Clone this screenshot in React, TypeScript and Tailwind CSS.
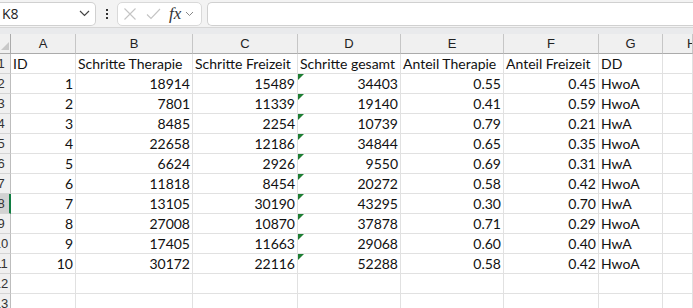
const rows: [number, number, number, number, string, string, string][] = [
  [1, 18914, 15489, 34403, "0.55", "0.45", "HwoA"],
  [2, 7801, 11339, 19140, "0.41", "0.59", "HwoA"],
  [3, 8485, 2254, 10739, "0.79", "0.21", "HwA"],
  [4, 22658, 12186, 34844, "0.65", "0.35", "HwoA"],
  [5, 6624, 2926, 9550, "0.69", "0.31", "HwA"],
  [6, 11818, 8454, 20272, "0.58", "0.42", "HwoA"],
  [7, 13105, 30190, 43295, "0.30", "0.70", "HwA"],
  [8, 27008, 10870, 37878, "0.71", "0.29", "HwoA"],
  [9, 17405, 11663, 29068, "0.60", "0.40", "HwA"],
  [10, 30172, 22116, 52288, "0.58", "0.42", "HwoA"],
];

const cols = "grid-cols-[11px_65px_117px_105px_103px_103px_95px_64px_1fr]";
const cell = "h-5 border-r border-b border-[#e1e1e1] overflow-hidden whitespace-nowrap px-[2px] leading-[19px] text-[14px] text-[#111]";
const cellFont = { fontFamily: "Lato, 'Open Sans', sans-serif" };

function RowHead({ n, active }: { n: number; active?: boolean }) {
  return (
    <div
      className={
        "h-5 overflow-hidden border-b border-[#d4d4d4] " +
        (active ? "bg-[#d2d2d2] border-r-2 border-r-[#107c41]" : "bg-[#f0f0f0] border-r border-r-[#bdbdbd]")
      }
    >
      <div
        className="ml-[-14px] w-[30px] text-center text-[13px] leading-[19px] text-[#333]"
        style={{ fontFamily: "'Liberation Sans', Arial, sans-serif" }}
      >
        {n}
      </div>
    </div>
  );
}

function Tri() {
  return <span className="absolute left-0 top-0 h-0 w-0 border-t-[6px] border-r-[6px] border-t-[#1e7e34] border-r-transparent" />;
}

export default function App() {
  return (
    <div className="h-[308px] w-[693px] overflow-hidden bg-white" style={{ fontFamily: "'Liberation Sans', Arial, sans-serif" }}>
      <div className="h-[28px] bg-[#f3f3f3] flex items-center border-b border-[#d6d6d6]">
        <div className="flex h-[24px] w-[96px] items-center justify-between rounded-r-[5px] border border-l-0 border-[#d0d0d0] bg-white pl-[2px] pr-[5px]">
          <span className="text-[14px] text-[#222]" style={{ fontFamily: "'Open Sans', sans-serif" }}>K8</span>
          <svg width="11" height="7" viewBox="0 0 11 7"><path d="M1 1l4.5 4.5L10 1" fill="none" stroke="#444" strokeWidth="1.2" /></svg>
        </div>
        <div className="flex w-[21px] flex-col items-center justify-center gap-[2px]">
          <span className="h-[2px] w-[2px] bg-[#333]" />
          <span className="h-[2px] w-[2px] bg-[#333]" />
          <span className="h-[2px] w-[2px] bg-[#333]" />
        </div>
        <div className="flex h-[24px] w-[85px] items-center rounded-[5px] border border-[#d9d9d9] bg-white pl-[5px]">
          <svg width="14" height="14" viewBox="0 0 14 14"><path d="M1.5 1.5l11 11M12.5 1.5l-11 11" stroke="#c4c4c4" strokeWidth="1.1" /></svg>
          <svg className="ml-[9px]" width="15" height="12" viewBox="0 0 15 12"><path d="M1 6.5l4 4L14 1" fill="none" stroke="#c4c4c4" strokeWidth="1.1" /></svg>
          <span className="ml-[8px] text-[17px] italic text-[#333]" style={{ fontFamily: "'Liberation Serif', serif" }}>fx</span>
          <svg className="ml-[4px]" width="9" height="6" viewBox="0 0 9 6"><path d="M1 1l3.5 3.5L8 1" fill="none" stroke="#888" strokeWidth="1" /></svg>
        </div>
        <div className="ml-[5px] h-[24px] flex-1 rounded-l-[5px] border border-r-0 border-[#d0d0d0] bg-white" />
      </div>
      <div className="h-[6px] bg-[#e9eaec]" />
      <div className={"grid " + cols} style={cellFont}>
        <div className="relative h-5 border-r border-b border-[#ababab] bg-[#f0f0f0]">
          <span className="absolute bottom-[3px] right-[1px] h-0 w-0 border-b-[8px] border-l-[8px] border-b-[#c8c8c8] border-l-transparent" />
        </div>
        {["A", "B", "C", "D", "E", "F", "G", "H"].map((c) => (
          <div
            key={c}
            className="h-5 overflow-hidden whitespace-nowrap border-r border-b border-r-[#c6c6c6] border-b-[#ababab] bg-[#f0f0f0] text-center text-[13px] leading-[19px] text-[#222]"
            style={{ fontFamily: "'Liberation Sans', Arial, sans-serif" }}
          >
            {c === "H" ? <span className="ml-[24px]">H</span> : c}
          </div>
        ))}

        <RowHead n={1} />
        <div className={cell}>ID</div>
        <div className={cell}>Schritte Therapie</div>
        <div className={cell}>Schritte Freizeit</div>
        <div className={cell}>Schritte gesamt</div>
        <div className={cell}>Anteil Therapie</div>
        <div className={cell}>Anteil Freizeit</div>
        <div className={cell}>DD</div>
        <div className={cell} />

        {rows.map((r, i) => (
          <div key={i} className="contents">
            <RowHead n={i + 2} active={i + 2 === 8} />
            <div className={cell + " text-right"}>{r[0]}</div>
            <div className={cell + " text-right"}>{r[1]}</div>
            <div className={cell + " text-right"}>{r[2]}</div>
            <div className={cell + " relative text-right"}>
              <Tri />
              {r[3]}
            </div>
            <div className={cell + " text-right"}>{r[4]}</div>
            <div className={cell + " text-right"}>{r[5]}</div>
            <div className={cell}>{r[6]}</div>
            <div className={cell} />
          </div>
        ))}

        {[12, 13].map((n) => (
          <div key={n} className="contents">
            <RowHead n={n} />
            {[0, 1, 2, 3, 4, 5, 6, 7].map((k) => (
              <div key={k} className={cell} />
            ))}
          </div>
        ))}
      </div>
    </div>
  );
}
